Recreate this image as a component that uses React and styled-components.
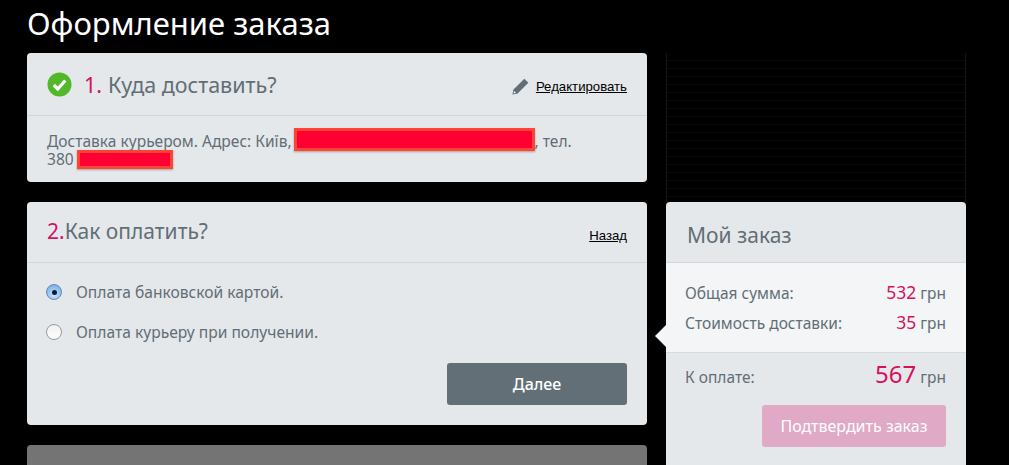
import React from "react";
import styled, { createGlobalStyle } from "styled-components";

const Global = createGlobalStyle`
  html, body {
    margin: 0;
    padding: 0;
    background: #000;
    overflow: hidden;
  }
  body {
    font-family: "Noto Sans", "Open Sans", sans-serif;
  }
`;

const Page = styled.div`
  width: 1009px;
  height: 465px;
  overflow: hidden;
  padding: 0 27px;
  box-sizing: border-box;
`;

const Title = styled.h1`
  margin: 0;
  height: 53px;
  font-size: 31px;
  line-height: 47px;
  font-weight: 400;
  color: #fff;
`;

const Columns = styled.div`
  display: grid;
  grid-template-columns: 620px 300px;
  column-gap: 19px;
  align-items: start;
`;

const LeftColumn = styled.div`
  display: flex;
  flex-direction: column;
  gap: 20px;
`;

const RightColumn = styled.div`
  display: flex;
  flex-direction: column;
`;

const Spacer = styled.div`
  height: 149px;
  box-sizing: border-box;
  border-left: 1px solid #161616;
  border-right: 1px solid #161616;
  background: repeating-linear-gradient(#000 0 7px, #090909 7px 8px);
`;

const Card = styled.section`
  background: #e5e8eb;
  border-radius: 4px;
`;

const CardHeader = styled.header`
  height: ${(p) => p.$height}px;
  box-sizing: border-box;
  padding: 0 20px;
  display: flex;
  align-items: center;
  justify-content: space-between;
  border-bottom: 1px solid #d2d6da;
`;

const Heading = styled.h2`
  margin: 0 0 ${(p) => p.$lift}px;
  display: flex;
  align-items: center;
  font-size: ${(p) => p.$size}px;
  font-weight: 400;
  color: #626e76;
`;

const StepNumber = styled.span`
  color: #d5115f;
  margin-right: ${(p) => p.$gap}px;
`;

const CheckBadge = styled.svg`
  width: 25px;
  height: 25px;
  margin-right: 12px;
`;

const HeaderAction = styled.div`
  display: flex;
  align-items: center;
  gap: 7px;
  margin-top: ${(p) => p.$offset}px;
`;

const SmallLink = styled.a`
  font-family: "Liberation Sans", sans-serif;
  font-size: 13.2px;
  color: #000;
  text-decoration: underline;
`;

const AddressText = styled.p`
  margin: 0;
  padding: 16px 20px 14px;
  font-size: 15.55px;
  line-height: 18px;
  color: #626e76;
`;

// tall block sitting on the text: negative margins keep the line height at 18px
const Redacted = styled.span`
  display: inline-block;
  box-sizing: border-box;
  width: ${(p) => p.$width}px;
  height: ${(p) => p.$height}px;
  margin: ${(p) => `${-(p.$height - 3) / 2}px 0 ${-(p.$height - 3) / 2}px ${p.$left}px`};
  vertical-align: ${(p) => (p.$height - 3) / 2 - 4}px;
  background: #ff0033;
  border: 3px solid #ff4433;
  box-shadow: 0 1px 2px rgba(0, 0, 0, 0.3);
`;

const PaymentBody = styled.div`
  padding: 19px 20px 20px 19px;
`;

const RadioRow = styled.div`
  display: flex;
  align-items: center;
  gap: 14px;
  height: 20px;
  margin-bottom: 20px;
  font-size: 15.6px;
  color: #626e76;
`;

const Radio = styled.span`
  width: 16px;
  height: 16px;
  box-sizing: border-box;
  border-radius: 50%;
  display: flex;
  align-items: center;
  justify-content: center;
  border: 1px solid ${(p) => (p.$checked ? "#6f86ae" : "#9a9a9a")};
  background: ${(p) =>
    p.$checked
      ? "radial-gradient(circle at 50% 70%, #c6e4ff, #7fb4ec 75%)"
      : "linear-gradient(#f0f0f0, #ffffff)"};
  &::after {
    content: "";
    width: 5px;
    height: 5px;
    border-radius: 50%;
    background: ${(p) => (p.$checked ? "#0c1a33" : "transparent")};
  }
`;

const ButtonRow = styled.div`
  display: flex;
  justify-content: flex-end;
`;

const NextButton = styled.button`
  width: 180px;
  height: 42px;
  border: 0;
  border-radius: 3px;
  margin-top: 1px;
  background: #636f76;
  color: #fff;
  font-family: inherit;
  font-size: 16px;
  font-weight: 500;
`;

const CollapsedCard = styled.div`
  height: 40px;
  background: #747474;
  border-radius: 4px 4px 0 0;
`;

const OrderCard = styled.aside`
  position: relative;
  height: 263px;
  background: #e5e8eb;
  border-radius: 4px 4px 0 0;
`;

const OrderHeading = styled.h2`
  margin: 0;
  height: 61px;
  box-sizing: border-box;
  padding: 5px 21px 0;
  display: flex;
  align-items: center;
  font-size: 21px;
  font-weight: 400;
  color: #626e76;
  border-bottom: 1px solid #d2d6da;
`;

const Summary = styled.div`
  position: relative;
  height: 90px;
  box-sizing: border-box;
  padding: 17px 20px 0 19px;
  display: flex;
  flex-direction: column;
  gap: 6px;
  background: #f3f5f6;
  border-bottom: 1px solid #d8dbde;
  &::before {
    content: "";
    position: absolute;
    left: -11px;
    top: 62px;
    border-style: solid;
    border-width: 11px 11px 11px 0;
    border-color: transparent #f3f5f6 transparent transparent;
  }
`;

const PriceRow = styled.div`
  display: flex;
  align-items: baseline;
  justify-content: space-between;
  height: 24px;
  font-size: 15.5px;
  line-height: 24px;
  color: #626e76;
`;

const Price = styled.b`
  font-weight: 400;
  font-size: ${(p) => p.$size}px;
  color: #d5115f;
`;

const TotalRow = styled(PriceRow)`
  padding: 5px 20px 0 19px;
  height: 42px;
  box-sizing: border-box;
  line-height: 32px;
`;

const ConfirmRow = styled.div`
  display: flex;
  justify-content: flex-end;
  padding: 10px 20px 0;
`;

const ConfirmButton = styled.button`
  width: 184px;
  height: 42px;
  border: 0;
  border-radius: 3px;
  background: #e0a9c5;
  color: #fff;
  font-family: inherit;
  font-size: 16px;
`;

export default function App() {
  return (
    <>
      <Global />
      <Page>
        <Title>Оформление заказа</Title>
        <Columns>
          <LeftColumn>
            <Card>
              <CardHeader $height={63}>
                <Heading $size={21.5} $lift={0}>
                  <CheckBadge viewBox="0 0 25 25">
                    <circle cx="12.5" cy="12.5" r="12" fill="#52b82a" />
                    <path d="M6.8 13 L10.8 17 L18.3 8.5" fill="none" stroke="#fff" strokeWidth="3.2" />
                  </CheckBadge>
                  <StepNumber $gap={6}>1.</StepNumber>
                  Куда доставить?
                </Heading>
                <HeaderAction $offset={4}>
                  <svg width="17" height="17" viewBox="0 0 16 16">
                    <path d="M11.6.6 L15.4 4.4 L5 14.8 L.4 15.6 L1.2 11 Z" fill="#626e76" />
                    <path d="M1.8 12 L4 14.2 L1.4 14.6 Z" fill="#e5e8eb" />
                  </svg>
                  <SmallLink href="#">Редактировать</SmallLink>
                </HeaderAction>
              </CardHeader>
              <AddressText>
                Доставка курьером. Адрес: Київ,
                <Redacted $width={241} $height={23} $left={2} />, тел.
                <br />
                380
                <Redacted $width={96} $height={19} $left={3} />
              </AddressText>
            </Card>
            <Card>
              <CardHeader $height={61}>
                <Heading $size={21} $lift={2}>
                  <StepNumber $gap={0}>2.</StepNumber>
                  Как оплатить?
                </Heading>
                <HeaderAction $offset={7}>
                  <SmallLink href="#">Назад</SmallLink>
                </HeaderAction>
              </CardHeader>
              <PaymentBody>
                <RadioRow>
                  <Radio $checked />
                  Оплата банковской картой.
                </RadioRow>
                <RadioRow>
                  <Radio />
                  Оплата курьеру при получении.
                </RadioRow>
                <ButtonRow>
                  <NextButton>Далее</NextButton>
                </ButtonRow>
              </PaymentBody>
            </Card>
            <CollapsedCard />
          </LeftColumn>
          <RightColumn>
            <Spacer />
            <OrderCard>
              <OrderHeading>Мой заказ</OrderHeading>
              <Summary>
                <PriceRow>
                  <span>Общая сумма:</span>
                  <span>
                    <Price $size={17.5}>532</Price> грн
                  </span>
                </PriceRow>
                <PriceRow>
                  <span>Стоимость доставки:</span>
                  <span>
                    <Price $size={17.5}>35</Price> грн
                  </span>
                </PriceRow>
              </Summary>
              <TotalRow>
                <span>К оплате:</span>
                <span>
                  <Price $size={24}>567</Price> грн
                </span>
              </TotalRow>
              <ConfirmRow>
                <ConfirmButton>Подтвердить заказ</ConfirmButton>
              </ConfirmRow>
            </OrderCard>
          </RightColumn>
        </Columns>
      </Page>
    </>
  );
}
